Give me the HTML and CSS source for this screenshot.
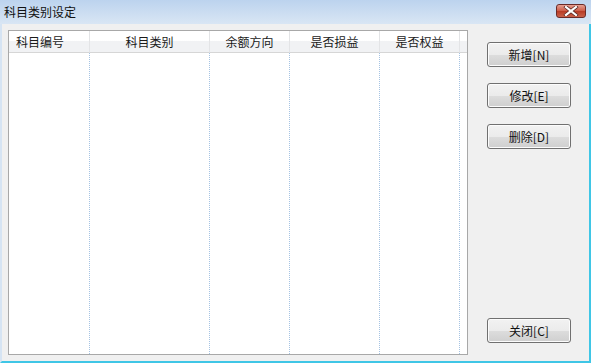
FILE: index.html
```html
<html>

<head>
    <meta charset="utf-8">
    <link rel="stylesheet" href="styles.css">
</head>

<body>
    <div class="window">
        <div class="titlebar">
            <span class="title">科目类别设定</span>
            <span class="close_btn">
                <svg width="16" height="10" viewBox="0 0 16 10">
                    <path d="M3 1 L13 9 M13 1 L3 9" stroke="#5a2a26" stroke-width="3.6" stroke-linecap="square" />
                    <path d="M3 1 L13 9 M13 1 L3 9" stroke="#ffffff" stroke-width="2.2" stroke-linecap="square" />
                </svg>
            </span>
        </div>
        <div class="content">
            <div class="grid_panel">
                <div class="head first">科目编号</div>
                <div class="head">科目类别</div>
                <div class="head">余额方向</div>
                <div class="head">是否损益</div>
                <div class="head">是否权益</div>
                <div class="head last"></div>
                <div class="col"></div>
                <div class="col"></div>
                <div class="col"></div>
                <div class="col"></div>
                <div class="col"></div>
                <div class="col last"></div>
            </div>
            <div class="buttons">
                <button class="btn">新增[N]</button>
                <button class="btn">修改[E]</button>
                <button class="btn">删除[D]</button>
                <button class="btn close">关闭[C]</button>
            </div>
        </div>
    </div>
</body>

</html>
```

FILE: styles.css
```css
body {
    margin: 0;
    font-family: "Noto Sans CJK SC", "Noto Sans", sans-serif;
    font-size: 12px;
    color: #1a1a1a;
}

.window {
    width: 591px;
    height: 363px;
    box-sizing: border-box;
    background-color: #f0f0f0;
    border-left: 2px solid #d6e4f3;
    border-right: 2px solid #3fc6e6;
    border-bottom: 2px solid #3fc6e6;
    display: flex;
    flex-direction: column;
}

.titlebar {
    height: 24px;
    margin-left: -2px;
    margin-right: -2px;
    padding: 0 5px 0 4px;
    display: flex;
    align-items: center;
    justify-content: space-between;
    background: linear-gradient(#bcd3ee, #d9e6f4);
}

.title {
    font-size: 12px;
    line-height: 14px;
    margin-top: -1px;
    color: #111;
}

.close_btn {
    width: 28px;
    height: 12px;
    margin-top: -2px;
    border: 1px solid #6b2b28;
    border-radius: 3px;
    background: linear-gradient(#e6a093, #cc5a45 50%, #b83a24 51%, #c9614a);
    display: flex;
    align-items: center;
    justify-content: center;
}

.content {
    flex: 1;
    display: flex;
    padding: 6px 0 0 6px;
}

.grid_panel {
    width: 460px;
    height: 325px;
    box-sizing: border-box;
    border: 1px solid #a8a8a8;
    background-color: #ffffff;
    display: grid;
    grid-template-columns: 81px 120px 80px 90px 80px 1fr;
    grid-template-rows: 22px 1fr;
}

.head {
    background: linear-gradient(#ffffff, #ffffff 45%, #f1f2f4 50%, #f1f2f4);
    border-right: 1px solid #e3e4e6;
    border-bottom: 1px solid #d6d6d6;
    text-align: center;
    line-height: 21px;
    box-sizing: border-box;
}

.head.first {
    text-align: left;
    padding-left: 7px;
}

.head.last {
    border-right: none;
}

.col {
    border-right: 1px dotted #a5c3e3;
}

.col.last {
    border-right: none;
}

.buttons {
    display: flex;
    flex-direction: column;
    gap: 16px;
    margin-left: 19px;
    padding-top: 12px;
    padding-bottom: 12px;
    height: 325px;
    box-sizing: border-box;
}

.btn {
    width: 84px;
    height: 25px;
    border: 1px solid #707070;
    border-radius: 3px;
    background: linear-gradient(#f2f2f2, #ebebeb 50%, #dddddd 51%, #cfcfcf);
    box-shadow: inset 0 0 0 1px #fcfcfc;
    font-family: "Noto Sans CJK SC", "Noto Sans", sans-serif;
    font-size: 12px;
    color: #111;
    padding: 0;
}

.btn.close {
    margin-top: auto;
}
```
